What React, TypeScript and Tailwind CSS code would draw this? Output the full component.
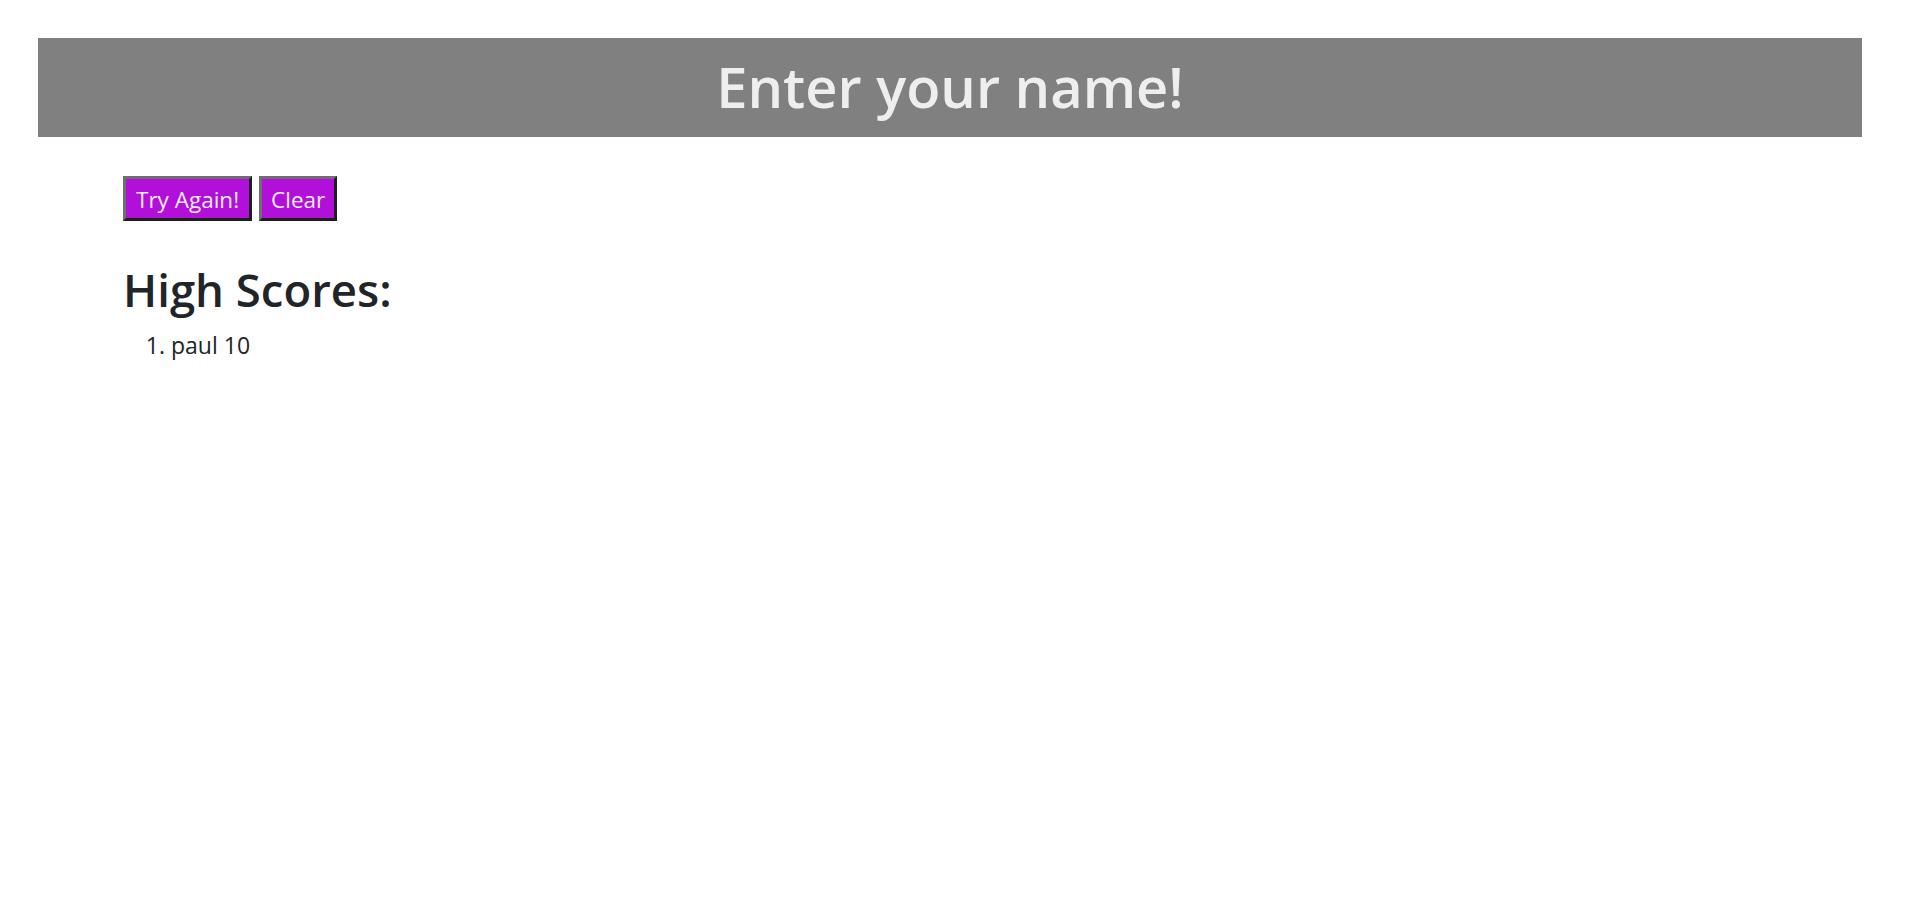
const scores = [{ name: "paul", score: 10 }];

export default function App() {
  return (
    <div className="min-h-screen bg-white px-[38px] pt-[38px] font-['Open_Sans',sans-serif] text-[#212529]">
      <header className="flex h-[99px] w-[1824px] items-center justify-center bg-[#808080] pb-[3px]">
        <h1 className="text-[56px] font-semibold leading-none text-[#eeeeee]">Enter your name!</h1>
      </header>

      <div className="pl-[85px] pt-[39px]">
        <div className="flex gap-[7px]">
          <button className="h-[45px] border-[3px] border-t-[#6e6e6e] border-l-[#6e6e6e] border-b-[#1e1e1e] border-r-[#1e1e1e] bg-[#b30fdb] px-[10px] pt-[3px] text-[22.5px] leading-none text-[#eeeeee]">
            Try Again!
          </button>
          <button className="h-[45px] border-[3px] border-t-[#6e6e6e] border-l-[#6e6e6e] border-b-[#1e1e1e] border-r-[#1e1e1e] bg-[#b30fdb] px-[9px] pt-[3px] text-[22.5px] leading-none text-[#eeeeee]">
            Clear
          </button>
        </div>

        <h2 className="mt-[40px] text-[45.5px] font-semibold leading-[56px]">High Scores:</h2>
        <ol className="mt-[12px] list-decimal pl-[48px] text-[23px] leading-[32px]">
          {scores.map((s, i) => (
            <li key={i}>
              {s.name} {s.score}
            </li>
          ))}
        </ol>
      </div>
    </div>
  );
}
